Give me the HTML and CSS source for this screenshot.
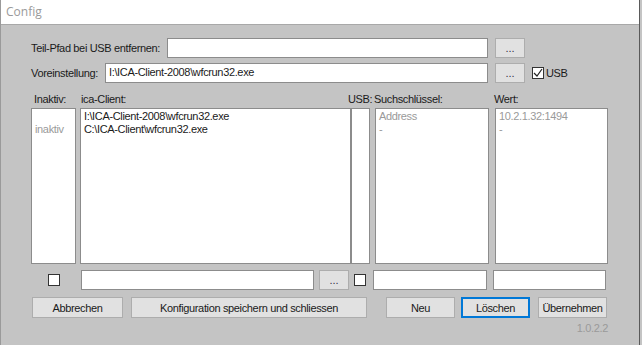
FILE: index.html
```html
<html>
<head>
    <link rel="stylesheet" href="styles.css">
</head>
<body>
    <div class="window">
        <div class="titlebar">Config</div>
        <div class="client">
            <div class="row row1">
                <span class="label label1">Teil-Pfad bei USB entfernen:</span>
                <div class="input input1"></div>
                <button class="btn dots">...</button>
            </div>
            <div class="row row2">
                <span class="label label2">Voreinstellung:</span>
                <div class="input input2">I:\ICA-Client-2008\wfcrun32.exe</div>
                <button class="btn dots">...</button>
                <span class="check checked"><svg width="10" height="10" viewBox="0 0 10 10"><path d="M1 5 L4 8 L9 1" fill="none" stroke="#222" stroke-width="1.2"/></svg></span>
                <span class="checklabel">USB</span>
            </div>
            <div class="headers">
                <span class="h-inaktiv">Inaktiv:</span>
                <span class="h-ica">ica-Client:</span>
                <span class="h-usb">USB:</span>
                <span class="h-such">Suchschlüssel:</span>
                <span class="h-wert">Wert:</span>
            </div>
            <div class="lists">
                <div class="list l-inaktiv">
                    <div class="item">&nbsp;</div>
                    <div class="item grey">inaktiv</div>
                </div>
                <div class="list l-ica">
                    <div class="item">I:\ICA-Client-2008\wfcrun32.exe</div>
                    <div class="item">C:\ICA-Client\wfcrun32.exe</div>
                </div>
                <div class="list l-usb"></div>
                <div class="list l-such">
                    <div class="item grey">Address</div>
                    <div class="item grey">-</div>
                </div>
                <div class="list l-wert">
                    <div class="item grey">10.2.1.32:1494</div>
                    <div class="item grey">-</div>
                </div>
            </div>
            <div class="editrow">
                <div class="cell-inaktiv"><span class="check"></span></div>
                <div class="input e-ica"></div>
                <button class="btn dots small">...</button>
                <span class="check e-usb"></span>
                <div class="input e-such"></div>
                <div class="input e-wert"></div>
            </div>
            <div class="buttons">
                <button class="btn b-abbrechen">Abbrechen</button>
                <button class="btn b-save">Konfiguration speichern und schliessen</button>
                <button class="btn b-neu">Neu</button>
                <button class="btn b-loeschen focus">Löschen</button>
                <button class="btn b-ueber">Übernehmen</button>
            </div>
            <div class="version">1.0.2.2</div>
        </div>
    </div>
</body>
</html>
```

FILE: styles.css
```css
body {
    margin: 0;
    background: #c4c4c4;
    font-family: "Liberation Sans", Arial, sans-serif;
    font-size: 11px;
    letter-spacing: -0.35px;
    color: #1a1a1a;
    white-space: nowrap;
}

.window {
    width: 640px;
    height: 345px;
    border-left: 1px solid #9a9a9a;
    border-right: 1px solid #5a5a5a;
    box-sizing: border-box;
    background: #c4c4c4;
}

.titlebar {
    height: 24px;
    line-height: 24px;
    background: #fff;
    color: #9a9a9a;
    font-family: "Open Sans", sans-serif;
    font-size: 12px;
    letter-spacing: 0;
    padding-left: 5px;
    border-bottom: 1px solid #a8a8a8;
}

.client {
    height: 320px;
}

.row {
    display: flex;
    align-items: center;
    height: 20px;
    padding-left: 30px;
}

.row1 {
    padding-top: 13px;
}

.row2 {
    margin-top: 5px;
}

.label1 {
    width: 136px;
}

.label2 {
    width: 74px;
}

.input {
    height: 20px;
    box-sizing: border-box;
    background: #fff;
    border: 1px solid #8c8c8c;
    padding: 2px 3px;
    overflow: hidden;
}

.input1 {
    width: 321px;
}

.input2 {
    width: 383px;
}

.btn {
    box-sizing: border-box;
    background: #e1e1e1;
    border: 1px solid #adadad;
    font-family: "Liberation Sans", Arial, sans-serif;
    font-size: 11px;
    letter-spacing: -0.35px;
    color: #1a1a1a;
    padding: 0;
    height: 20px;
}

.dots {
    width: 30px;
    margin-left: 7px;
    color: #334;
    letter-spacing: 0;
}

.check {
    display: inline-flex;
    align-items: center;
    justify-content: center;
    width: 12px;
    height: 12px;
    box-sizing: border-box;
    border: 1px solid #333;
    background: #fff;
}

.checked {
    margin-left: 7px;
}

.checklabel {
    margin-left: 2px;
}

.headers {
    position: relative;
    height: 14px;
    margin-top: 10px;
}

.headers span {
    position: absolute;
    top: 0;
}

.h-inaktiv { left: 33px; }
.h-ica { left: 80px; }
.h-usb { left: 347px; }
.h-such { left: 373px; }
.h-wert { left: 493px; }

.lists {
    display: flex;
    margin-top: 1px;
    padding-left: 30px;
    height: 156px;
}

.list {
    box-sizing: border-box;
    background: #fff;
    border: 1px solid #8c8c8c;
    padding: 1px 3px;
    height: 156px;
}

.item {
    height: 13px;
    line-height: 13px;
}

.grey {
    color: #9a9a9a;
}

.l-inaktiv { width: 45px; }
.l-ica { width: 271px; margin-left: 4px; }
.l-usb { width: 19px; }
.l-such { width: 114px; margin-left: 5px; }
.l-wert { width: 113px; margin-left: 6px; }

.editrow {
    display: flex;
    align-items: center;
    margin-top: 6px;
    padding-left: 30px;
    height: 20px;
}

.cell-inaktiv {
    width: 45px;
    display: flex;
    justify-content: center;
}

.e-ica {
    width: 233px;
    margin-left: 5px;
}

.small {
    margin-left: 5px;
}

.e-usb {
    margin-left: 5px;
}

.e-such {
    width: 114px;
    margin-left: 7px;
}

.e-wert {
    width: 113px;
    margin-left: 6px;
}

.buttons {
    display: flex;
    margin-top: 7px;
    padding-left: 31px;
}

.buttons .btn {
    height: 21px;
}

.b-abbrechen { width: 91px; }
.b-save { width: 236px; margin-left: 8px; }
.b-neu { width: 69px; margin-left: 19px; }
.b-loeschen { width: 69px; margin-left: 6px; }
.b-ueber { width: 69px; margin-left: 8px; }

.focus {
    border: 2px solid #0078d7;
}

.version {
    text-align: right;
    width: 607px;
    margin-top: 4px;
    color: #9a9a9a;
}
```
